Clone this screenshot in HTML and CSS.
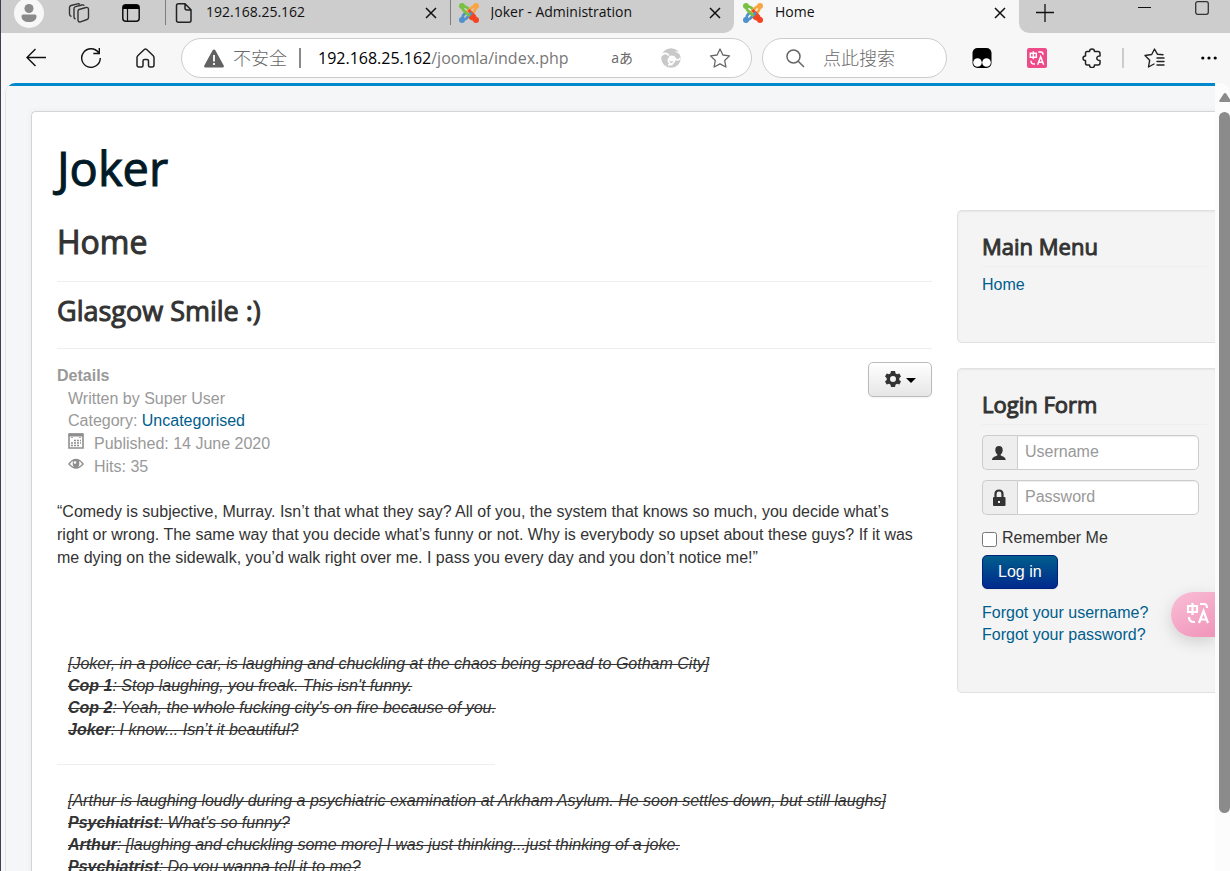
FILE: index.html
```html
<!DOCTYPE html>
<html lang="en">
<head>
<meta charset="utf-8">
<title>Home</title>
<link rel="stylesheet" href="styles.css">
</head>
<body>
<svg class="defs" aria-hidden="true">
  <symbol id="joomla" viewBox="0 0 20 20">
    <g fill="none" stroke-width="2.800" stroke-linecap="butt" stroke-linejoin="round">
      <path d="M17 17l-2-1.500L11 11.500M17 3l-2.500 1.200" stroke="#f44321"/>
      <path d="M3 3.500c.8 1 .5 2.500 1.500 3.700L10.500 13" stroke="#7ac143"/>
      <path d="M3.500 3c1.500 1 3 .3 4.500 1.500l2.200 2" stroke="#7ac143"/>
      <path d="M16.500 3c-1 .8-2.500.5-3.700 1.500L7 10.500" stroke="#f9a541"/>
      <path d="M17 3.500c-1 1.500-.3 3-1.500 4.500l-2 2.200" stroke="#f9a541"/>
      <path d="M17 16.500c-.8-1-.5-2.500-1.500-3.700L9.500 7" stroke="#f44321"/>
      <path d="M16.500 17c-1.500-1-3-.3-4.500-1.500l-2.200-2" stroke="#f44321"/>
      <path d="M3.500 17c1-.8 2.500-.5 3.700-1.500L13 9.500" stroke="#5091cd"/>
      <path d="M3 16.500c1-1.500.3-3 1.500-4.500l2-2.200" stroke="#5091cd"/>
      <path d="M6 8.700L10.500 13" stroke="#7ac143"/>
    </g>
    <circle cx="3" cy="3" r="3" fill="#7ac143"/><circle cx="17" cy="3" r="3" fill="#f9a541"/>
    <circle cx="17" cy="17" r="3" fill="#f44321"/><circle cx="3" cy="17" r="3" fill="#5091cd"/>
  </symbol>
  <symbol id="close" viewBox="0 0 12 12"><path d="M1 1l10 10M11 1L1 11" fill="none" stroke="#111" stroke-width="1.500"/></symbol>
  <symbol id="translate" viewBox="0 0 24 24">
    <g fill="none" stroke="#fff" stroke-width="2.200">
      <path d="M2 5h9v6H2zM6.500 2v12"/><path d="M14 3h4q3 0 3 4"/><path d="M3 16q0 5 5 5h1"/><path d="M13 22l4.500-12L22 22M14.500 18.500h6"/>
    </g>
  </symbol>
</svg>

<header class="browser">
  <nav class="tabstrip" aria-label="Tabs">
    <div class="tabs-before">
      <div class="strip-tools">
        <button class="avatar" aria-label="Profile"><svg width="16" height="18" viewBox="0 0 16 18"><circle cx="8" cy="4.500" r="4.500" fill="#8a8a8a"/><path d="M2 10.500h12q1.500 0 1.500 1.500c0 4-3 6-7.500 6S.5 16 .5 12q0-1.500 1.500-1.500z" fill="#8a8a8a"/></svg></button>
        <button class="icon-btn" aria-label="Workspaces"><svg width="22" height="20" viewBox="0 0 22 20" fill="none" stroke="#333" stroke-width="1.400"><path d="M11 6.500l7-2q2.500-.5 2.500 2v8q0 1.500-1.500 2l-6.500 2.300q-2.500.7-2.500-2V8q0-1 1-1.500z"/><path d="M7.500 16q-1.500-.5-1.500-2V5.500Q6 4 7.500 3.600L14 2q1.500-.4 2.300.6"/><path d="M3.500 13.500Q1.500 13 1.500 11V4.500Q1.500 3 3 2.500L9.500.9q1.500-.4 2.300.6"/></svg></button>
        <button class="icon-btn" aria-label="Tab actions"><svg width="18" height="18" viewBox="0 0 18 18"><rect x=".8" y=".8" width="16.400" height="16.400" rx="3" fill="none" stroke="#111" stroke-width="1.500"/><path d="M1 5V3q0-2 2-2h12q2 0 2 2v2z" fill="#000"/><path d="M5.500 5v12" stroke="#111" stroke-width="1.200"/></svg></button>
      </div>
      <div class="tab">
        <svg class="favicon" viewBox="0 0 20 20" fill="none" stroke="#222" stroke-width="1.500"><path d="M4.500.8H11l6 6v10.400q0 2-2 2H4.500q-2 0-2-2V2.800q0-2 2-2zM11 1v4q0 2 2 2h4"/></svg>
        <span class="tab-title">192.168.25.162</span>
        <button class="tab-close" aria-label="Close tab"><svg width="12" height="12"><use href="#close"/></svg></button>
      </div>
      <div class="tab">
        <svg class="favicon"><use href="#joomla"/></svg>
        <span class="tab-title">Joker - Administration</span>
        <button class="tab-close" aria-label="Close tab"><svg width="12" height="12"><use href="#close"/></svg></button>
      </div>
    </div>
    <div class="tab tab-active">
      <svg class="favicon"><use href="#joomla"/></svg>
      <span class="tab-title">Home</span>
      <button class="tab-close" aria-label="Close tab"><svg width="12" height="12"><use href="#close"/></svg></button>
    </div>
    <div class="tabs-after">
      <button class="icon-btn" aria-label="New tab"><svg width="18" height="18" viewBox="0 0 18 18" stroke="#111" stroke-width="1.300"><path d="M9 0v18M0 8.500h18"/></svg></button>
      <div class="window-buttons">
        <button class="icon-btn" aria-label="Minimize"><svg width="13" height="14" viewBox="0 0 13 14"><path d="M0 6.500h13" stroke="#111"/></svg></button>
        <button class="icon-btn" aria-label="Maximize"><svg width="14" height="14" viewBox="0 0 14 14"><rect x=".7" y=".7" width="12.600" height="12.600" rx="2" fill="none" stroke="#333" stroke-width="1.300"/></svg></button>
      </div>
    </div>
  </nav>

  <div class="toolbar">
    <div class="nav-buttons">
      <button class="icon-btn" aria-label="Back"><svg width="20" height="20" viewBox="0 0 20 20" fill="none" stroke="#111" stroke-width="1.400"><path d="M20 9.500H1M9.500 1L1 9.500 9.500 18"/></svg></button>
      <button class="icon-btn" aria-label="Refresh"><svg width="20" height="20" viewBox="0 0 20 20" fill="none" stroke="#111" stroke-width="1.400"><path d="M19.300 10A9.300 9.300 0 1 1 17.500 4.500M18.300 0v5.500h-6"/></svg></button>
      <button class="icon-btn" aria-label="Home"><svg width="19" height="20" viewBox="0 0 19 20" fill="none" stroke="#222" stroke-width="1.500"><path d="M2 7.500l6.300-6q1.200-1 2.400 0l6.300 6q1 1 1 2V17q0 2-2 2h-2q-1.500 0-1.500-1.500V13q0-1.500-1.500-1.500H8.500Q7 11.500 7 13v4.500Q7 19 5.500 19H3q-2 0-2-2V9.500q0-1 1-2z"/></svg></button>
    </div>
    <div class="pill address">
      <svg width="20" height="19" viewBox="0 0 20 19"><path d="M10 .5q1 0 1.500 1l8.200 15q.7 2-1.200 2h-17q-1.900 0-1.200-2l8.200-15Q9 .5 10 .5z" fill="#616161"/><path d="M10 6v6.500M10 14v2" stroke="#fff" stroke-width="1.800"/></svg>
      <span class="insecure" lang="zh">不安全</span>
      <span class="divider"></span>
      <span class="url" role="textbox" aria-label="Address"><span class="url-host">192.168.25.162</span>/joomla/index.php</span>
      <div class="address-tools">
        <button class="icon-btn read" aria-label="Translate">aあ</button>
        <button class="icon-btn" aria-label="Assistant"><svg width="20" height="20" viewBox="0 0 20 20"><circle cx="10" cy="10" r="9.800" fill="#c9c9c9"/><circle cx="10.500" cy="10.500" r="3" fill="#fff"/><path d="M0 8q4-5 8-.5M12.500 8q3 4-.5 7-2 2-5 2M14 10q2.500 4 5.500 0" fill="none" stroke="#fff" stroke-width="1.600"/><path d="M7.500 10.500q-1 4.500 4 6.500" fill="none" stroke="#fff" stroke-width="1.600"/><path d="M20 4v5q-2-5-7-5 3-1 7 0z" fill="#fff"/></svg></button>
        <button class="icon-btn" aria-label="Add to favorites"><svg width="22" height="20" viewBox="0 0 22 20" fill="none" stroke="#666" stroke-width="1.300" stroke-linejoin="round"><path d="M11 1l2.900 6 6.600.9-4.800 4.600 1.200 6.500L11 15.900 5.100 19l1.200-6.500L1.500 7.900l6.600-.9z"/></svg></button>
      </div>
    </div>
    <label class="pill search">
      <svg width="19" height="19" viewBox="0 0 19 19" fill="none" stroke="#666" stroke-width="1.500"><circle cx="7.500" cy="7.500" r="6.500"/><path d="M12.200 12.200L18 18"/></svg>
      <input class="search-input" type="text" placeholder="点此搜索" aria-label="点此搜索">
    </label>
    <div class="extensions">
      <button class="icon-btn" aria-label="Tampermonkey"><svg width="20" height="20" viewBox="0 0 20 20"><rect x=".5" width="19" height="20" rx="5" fill="#000"/><circle cx="5.500" cy="14.500" r="4.300" fill="#fff"/><circle cx="14.500" cy="14.500" r="4.300" fill="#fff"/></svg></button>
      <button class="icon-btn translate-ext" aria-label="Translate extension"><svg width="16" height="16"><use href="#translate"/></svg></button>
      <button class="icon-btn" aria-label="Extensions"><svg width="20" height="20" viewBox="0 0 20 20" fill="none" stroke="#222" stroke-width="1.500" stroke-linejoin="round"><path d="M5 3.500h2.500C7.500 0 12.500 0 12.500 3.500H16q2 0 2 2V8c-4-.5-4.500 4.500 0 4.500V15q0 2-2 2h-3.500c0 3.500-5 3.500-5 0H5q-1.500 0-1.500-2v-2.500C.2 12.500.2 8 3.500 8V5.500q0-2 1.500-2z"/></svg></button>
      <span class="toolbar-divider"></span>
      <button class="icon-btn" aria-label="Favorites"><svg width="21" height="20" viewBox="0 0 21 20" fill="none" stroke="#222" stroke-width="1.400" stroke-linejoin="round"><path d="M19 6.700l-5.500-.4L10.500 1 7.700 6.500 1 7.500l4.700 4.700L4.500 19l5.500-3M13 10h7M13 13.500h7M13 17h7" stroke-linecap="round"/></svg></button>
      <button class="icon-btn more" aria-label="Settings and more"><svg width="16" height="4" viewBox="0 0 16 4"><circle cx="1.800" cy="2" r="1.600"/><circle cx="8" cy="2" r="1.600"/><circle cx="14.200" cy="2" r="1.600"/></svg></button>
    </div>
  </div>
</header>

<div class="viewport">
  <div class="page">
    <div class="card">
      <a class="brand" href="#">Joker</a>
      <div class="columns">
        <main class="content">
          <h1 class="page-title">Home</h1>
          <h2 class="article-title">Glasgow Smile :)</h2>
          <div class="article-head">
            <dl class="details">
              <dt>Details</dt>
              <dd>Written by Super User</dd>
              <dd>Category: <a href="#">Uncategorised</a></dd>
              <dd class="with-icon"><svg width="16" height="16" viewBox="0 0 16 16" fill="none" stroke="#8e8e8e"><path d="M1 1h14v14H1z" stroke-width="1.600"/><path d="M1 2h14" stroke-width="3"/><path d="M4 5v-1M12 5v-1" stroke-width="1.500"/><path d="M6 7.500h7M3 10h10M3 12.500h8" stroke-dasharray="2 1" stroke-width="1.500"/></svg>Published: 14 June 2020</dd>
              <dd class="with-icon"><svg width="16" height="16" viewBox="0 0 16 16"><path d="M0 8q8-10.500 16 0-8 9.500-16 0z" fill="#8e8e8e"/><path d="M2 8q1.500-2.500 3-3-1 4 1 6-2.500-.8-4-3zM14 8q-1.500-2.500-3-3 1 4-1 6 2.500-.8 4-3z" fill="#fff"/><circle cx="7" cy="6.500" r="1.300" fill="#fff"/></svg>Hits: 35</dd>
            </dl>
            <button class="btn gear" aria-label="Article tools">
              <svg width="16" height="16" viewBox="0 0 16 16"><path fill="#333" fill-rule="evenodd" d="M6 0h4l.5 2.300 1.500.9 2.300-.8 1.700 3.200-1.700 1.500v1.800L16 10.400l-1.700 3.200-2.300-.8-1.500.9L10 16H6l-.5-2.300-1.500-.9-2.300.8L0 10.400l1.700-1.500V7.100L0 5.600l1.700-3.200 2.300.8 1.500-.9zM8 5a3 3 0 1 0 0 6 3 3 0 0 0 0-6z"/></svg>
              <span class="caret"></span>
            </button>
          </div>
          <p class="quote">“Comedy is subjective, Murray. Isn’t that what they say? All of you, the system that knows so much, you decide what’s right or wrong. The same way that you decide what’s funny or not. Why is everybody so upset about these guys? If it was me dying on the sidewalk, you’d walk right over me. I pass you every day and you don’t notice me!”</p>
          <div class="dialogue"><s>[Joker, in a police car, is laughing and chuckling at the chaos being spread to Gotham City]<br><b>Cop 1</b>: Stop laughing, you freak. This isn't funny.<br><b>Cop 2</b>: Yeah, the whole fucking city's on fire because of you.<br><b>Joker</b>: I know... Isn’t it beautiful?</s></div>
          <hr class="break">
          <div class="dialogue"><s>[Arthur is laughing loudly during a psychiatric examination at Arkham Asylum. He soon settles down, but still laughs]<br><b>Psychiatrist</b>: What's so funny?<br><b>Arthur</b>: [laughing and chuckling some more] I was just thinking...just thinking of a joke.<br><b>Psychiatrist</b>: Do you wanna tell it to me?</s></div>
        </main>
        <aside class="sidebar">
          <section class="well">
            <h3>Main Menu</h3>
            <ul class="menu"><li><a href="#">Home</a></li></ul>
          </section>
          <section class="well">
            <h3>Login Form</h3>
            <form class="login">
              <div class="field">
                <label class="addon" for="username" aria-label="Username"><svg width="16" height="16" viewBox="0 0 16 16" fill="#333"><path d="M8 1c2.500 0 3.700 1.500 3.700 4 0 2-1 3.500-2 4.500v1c2 1 5 1.500 5 4.500H1c0-3 3.300-3.500 5.300-4.500v-1c-1-1-2-2.500-2-4.500C4.300 2.500 5.500 1 8 1z"/></svg></label>
                <input id="username" type="text" placeholder="Username">
              </div>
              <div class="field">
                <label class="addon" for="password" aria-label="Password"><svg width="16" height="18" viewBox="0 0 16 18"><path d="M4.500 9V5q0-3.500 3.500-3.500T11.500 5v4" fill="none" stroke="#333" stroke-width="2.200"/><rect x="2" y="8" width="12.500" height="9" rx="1" fill="#333"/><path d="M7 12h2v2H7z" fill="#eee"/></svg></label>
                <input id="password" type="password" placeholder="Password">
              </div>
              <div class="remember"><input id="remember" type="checkbox"><label for="remember">Remember Me</label></div>
              <button class="btn btn-primary" type="button">Log in</button>
            </form>
            <ul class="menu"><li><a href="#">Forgot your username?</a></li><li><a href="#">Forgot your password?</a></li></ul>
          </section>
        </aside>
      </div>
    </div>
    <button class="float-translate" aria-label="Translate page"><svg width="24" height="24"><use href="#translate"/></svg></button>
  </div>
  <div class="scrollbar" aria-hidden="true">
    <svg width="12" height="9" viewBox="0 0 12 9"><path d="M6 0q.8 0 1.300.8l4.400 6.700q.6 1.500-1 1.500H1.300q-1.600 0-1-1.500L4.700.8Q5.200 0 6 0z" fill="#8b8b8b"/></svg>
    <div class="thumb"></div>
  </div>
</div>
</body>
</html>
```
FILE: styles.css
```css
* { box-sizing: border-box; }
html, body { height: 100%; }
body {
  margin: 0;
  display: flex;
  flex-direction: column;
  overflow: hidden;
  border-left: 1px solid #3f3f52;
  background: #f7f7f7;
  color: #333;
  font: 16px/22px "Liberation Sans", Arial, sans-serif;
}
h1, h2, h3, p, dl, dd, ul { margin: 0; padding: 0; }
ul { list-style: none; }
a { color: #005e8d; text-decoration: none; }
button, input { font: inherit; }
svg { display: block; flex: none; }
.defs { position: absolute; width: 0; height: 0; }

/* Browser chrome */
.browser { flex: none; font-family: "Open Sans", "Noto Sans CJK SC", sans-serif; }
.icon-btn {
  display: flex;
  align-items: center;
  justify-content: center;
  flex: none;
  padding: 0;
  border: 0;
  background: none;
}
.tabstrip { display: flex; height: 33px; }
.tabs-before, .tabs-after {
  display: flex;
  align-items: center;
  padding-bottom: 8px;
  background: #cdcdcd;
}
.tabs-before { flex: 0 1 733px; min-width: 0; border-radius: 0 0 10px 0; }
.tabs-after { flex: 1; justify-content: space-between; padding-left: 17px; border-radius: 0 0 0 10px; }
.strip-tools { display: flex; align-items: center; flex: none; width: 164px; padding-left: 13px; gap: 24px; }
.avatar {
  display: flex;
  align-items: center;
  justify-content: center;
  width: 30px;
  height: 30px;
  padding: 0;
  border: 0;
  border-radius: 50%;
  background: #f7f7f7;
}
.strip-tools .icon-btn:last-child { margin-left: 8px; }
.tab {
  display: flex;
  align-items: center;
  flex: 1 1 0;
  min-width: 0;
  height: 25px;
  padding: 0 9px 0 8px;
  gap: 12px;
  border-left: 1px solid #7d7d7d;
  font-size: 14px;
}
.tab-active { flex: 0 1 285px; border-left: 0; padding-left: 9px; }
.favicon { width: 20px; height: 20px; }
.tab-title { flex: 1; overflow: hidden; padding-bottom: 2px; white-space: nowrap; color: #111; }
.tab-close { display: flex; align-items: center; justify-content: center; width: 20px; height: 20px; padding: 0; border: 0; background: none; }
.window-buttons { display: flex; gap: 44px; padding: 0 21px 10px 0; }

.toolbar { display: flex; align-items: center; height: 50px; padding: 0 13px 0 25px; }
.nav-buttons { display: flex; gap: 35px; margin-right: 26px; }
.pill {
  display: flex;
  align-items: center;
  height: 40px;
  border: 1px solid #ccc;
  border-radius: 20px;
  background: #fff;
}
.address { flex: 1; min-width: 0; padding: 0 20px 0 22px; color: #777; }
.insecure { margin: 0 12px 0 9px; padding-bottom: 2px; font: 18px/24px "Noto Sans CJK SC", sans-serif; font-weight: 300; color: #666; white-space: nowrap; }
.divider { width: 2px; height: 20px; background: #8a8a8a; }
.url { flex: 1; margin-left: 17px; overflow: hidden; white-space: nowrap; font-size: 16px; line-height: 24px; }
.url-host { color: #000; }
.address-tools { display: flex; align-items: center; gap: 28px; }
.read { color: #666; font-size: 14px; }
.search { width: 185px; margin-left: 10px; padding: 0 20px 0 23px; }
.search-input { width: 100%; min-width: 0; margin-left: 18px; padding: 0 0 2px; border: 0; background: none; font: 18px/24px "Noto Sans CJK SC", sans-serif; font-weight: 300; }
.search-input::placeholder { color: #6b6b6b; opacity: 1; }
.extensions { display: flex; align-items: center; gap: 20px; margin-left: 25px; }
.extensions .icon-btn + .icon-btn { margin-left: 15px; }
.extensions .more.icon-btn { margin-left: 16px; }
.extensions .translate-ext { width: 20px; height: 20px; border-radius: 2px; background: #ee4b8b; }
.toolbar-divider { width: 2px; height: 20px; background: #ccc; }

/* Web page */
.viewport { display: flex; flex: 1; min-height: 0; margin-left: 4px; border-left: 1px solid #e4e4e6; border-radius: 10px 10px 0 0; overflow: hidden; }
.page { position: relative; flex: 1; min-width: 0; overflow: hidden; padding: 25px 0 0 25px; border-top: 3px solid #08c; background: #f4f6f7; }
.card {
  min-height: 100%;
  padding: 30px 0 20px 25px;
  border: 1px solid #d5d5d8;
  border-right: 0;
  border-radius: 5px 0 0 0;
  background: #fff;
  box-shadow: 0 0 6px rgba(0, 0, 0, .05);
}
.brand, h1, h2, h3 { font-family: "Open Sans", sans-serif; font-weight: 400; -webkit-text-stroke: 1px; }
.brand { display: table; font-size: 47px; line-height: 52px; color: #001a27; }
.columns { display: grid; grid-template-columns: minmax(0, 1fr) 258px; gap: 25px; margin-top: 16px; }
.content { padding-top: 14px; }
.page-title { padding-bottom: 21px; border-bottom: 1px solid #eee; font-size: 32px; line-height: 36px; }
.article-title { margin-top: 14px; padding-bottom: 22px; border-bottom: 1px solid #eee; font-size: 27px; line-height: 30px; }
.article-head { display: flex; justify-content: space-between; align-items: flex-start; padding-top: 13px; }
.details { padding-top: 2px; color: #999; }
.details dt { font-weight: 700; line-height: 24px; }
.details dd { margin-left: 11px; }
.with-icon { display: flex; gap: 10px; padding-top: 1px; }
.btn { border: 1px solid #bbb; border-radius: 5px; box-shadow: 0 1px 2px rgba(0, 0, 0, .05); }
.gear { display: flex; align-items: center; justify-content: center; gap: 5px; width: 64px; height: 35px; padding: 0 0 2px; background: linear-gradient(#fff, #e6e6e6); }
.caret { margin-top: 4px; border: 5px solid transparent; border-top-color: #000; border-bottom: 0; }
.quote { margin-top: 22px; padding-right: 12px; line-height: 23px; }
.dialogue { margin-top: 84px; padding-left: 11px; font-style: italic; }
.break { width: 50%; height: 1px; margin: 23px 0 0; border: 0; background: #eee; }
.break + .dialogue { margin-top: 25px; }

.well {
  padding: 23px 8px 46px 24px;
  border: 1px solid #e1e1e1;
  border-right: 0;
  border-radius: 5px 0 0 5px;
  background: #f4f4f4;
  box-shadow: inset 0 1px 2px rgba(0, 0, 0, .06);
}
.well + .well { margin-top: 25px; }
.well h3 { margin-bottom: 7px; padding-bottom: 7px; border-bottom: 1px solid #eee; font-size: 22px; line-height: 25px; }
.login { padding-top: 3px; }
.field { display: flex; width: 217px; height: 35px; margin-bottom: 10px; }
.addon { display: flex; align-items: center; justify-content: center; width: 35px; border: 1px solid #ccc; border-right: 0; border-radius: 5px 0 0 5px; background: #eee; padding-right: 3px; }
.field input { flex: 1; min-width: 0; padding: 0 7px 2px; border: 1px solid #ccc; border-radius: 0 5px 5px 0; background: #fff; box-shadow: inset 0 1px 1px rgba(0, 0, 0, .07); color: #555; }
.field input::placeholder { color: #999; opacity: 1; }
.remember { display: flex; align-items: center; gap: 5px; padding-top: 2px; }
.remember input { width: 15px; height: 15px; margin: 2px 0 0; }
.btn-primary { display: block; height: 34px; margin: 6px 0 13px; padding: 0 15px; border-color: #00227a; background: linear-gradient(#005e8d, #00298d); color: #fff; text-shadow: 0 -1px 0 rgba(0, 0, 0, .25); }

.float-translate {
  position: absolute;
  top: 506px;
  right: 0;
  display: flex;
  align-items: center;
  width: 44px;
  height: 45px;
  padding: 0 0 4px 15px;
  border: 0;
  border-radius: 23px 0 0 23px;
  background: linear-gradient(150deg, #f9bfd6, #f094ba);
  box-shadow: 0 5px 16px rgba(0, 0, 0, .15);
}
.scrollbar { display: flex; flex-direction: column; align-items: center; flex: none; width: 15px; padding: 10px 0 0 4px; background: #fcfcfc; }
.thumb { width: 11px; height: 701px; margin-top: 10px; border-radius: 6px; background: #8b8b8b; }
```
